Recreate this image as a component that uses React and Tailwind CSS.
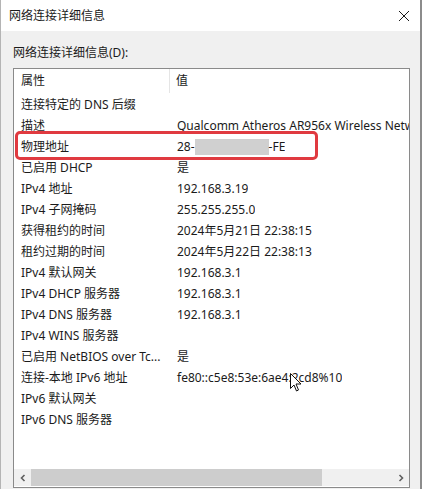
import React from 'react'

const rows = [
  ['连接特定的 DNS 后缀', ''],
  ['描述', 'Qualcomm Atheros AR956x Wireless Network Adapter'],
  ['物理地址', 'mac'],
  ['已启用 DHCP', '是'],
  ['IPv4 地址', '192.168.3.19'],
  ['IPv4 子网掩码', '255.255.255.0'],
  ['获得租约的时间', '2024年5月21日 22:38:15'],
  ['租约过期的时间', '2024年5月22日 22:38:13'],
  ['IPv4 默认网关', '192.168.3.1'],
  ['IPv4 DHCP 服务器', '192.168.3.1'],
  ['IPv4 DNS 服务器', '192.168.3.1'],
  ['IPv4 WINS 服务器', ''],
  ['已启用 NetBIOS over Tc...', '是'],
  ['连接-本地 IPv6 地址', 'fe80::c5e8:53e:6ae4:2cd8%10'],
  ['IPv6 默认网关', ''],
  ['IPv6 DNS 服务器', ''],
]

function Value({ v }) {
  if (v === 'mac') {
    return (
      <span className="flex items-center">
        28-
        <span className="inline-block w-[74px] h-[16px] bg-[#d0d0d0]" />
        -FE
      </span>
    )
  }
  return <span className="whitespace-nowrap">{v}</span>
}

export default function App() {
  return (
    <div
      className="relative w-[422px] h-[489px] overflow-hidden bg-[#f0f0f0] text-[#1b1b1b] text-[12px] border-l border-r-2 border-l-[#b4b4b4] border-r-[#8c8c8c]"
      style={{ fontFamily: '"Noto Sans", "Noto Sans CJK SC", sans-serif' }}
    >
      {/* title bar */}
      <div className="flex items-center justify-between h-[31px] bg-white pl-[8px] pr-[9px]">
        <span>网络连接详细信息</span>
        <svg width="12" height="12" viewBox="0 0 12 12" className="mr-[1px]">
          <path d="M1 1 L11 11 M11 1 L1 11" stroke="#1b1b1b" strokeWidth="1" fill="none" />
        </svg>
      </div>

      <div className="pl-[12px] pt-[13px]">
        <div className="leading-[17px] h-[24px]">网络连接详细信息(D):</div>

        {/* list box */}
        <div className="flex flex-col w-[397px] h-[420px] bg-white border border-[#8a8a8a]">
          <div className="flex h-[24px] items-center">
            <div className="w-[156px] pl-[7px] h-full flex items-center border-r border-[#e5e5e5]">属性</div>
            <div className="pl-[6px]">值</div>
          </div>
          <div className="pt-[1px] overflow-hidden">
            {rows.map(([k, v]) => (
              <div key={k} className="flex h-[21px] items-center">
                <div className="w-[157px] shrink-0 pl-[7px] whitespace-nowrap">{k}</div>
                <div className="pl-[6px] whitespace-nowrap overflow-hidden">
                  <Value v={v} />
                </div>
              </div>
            ))}
          </div>
          <div className="flex-1" />
          {/* horizontal scrollbar */}
          <div className="flex items-center h-[17px] bg-[#f0f0f0] mb-[1px]">
            <div className="w-[17px] h-full flex items-center justify-center">
              <svg width="8" height="8" viewBox="0 0 8 8">
                <path d="M5.5 1 L2.5 4 L5.5 7" stroke="#606060" strokeWidth="1.6" fill="none" />
              </svg>
            </div>
            <div className="w-[291px] h-full bg-[#cdcdcd]" />
            <div className="flex-1" />
            <div className="w-[17px] h-full flex items-center justify-center">
              <svg width="8" height="8" viewBox="0 0 8 8">
                <path d="M2.5 1 L5.5 4 L2.5 7" stroke="#606060" strokeWidth="1.6" fill="none" />
              </svg>
            </div>
          </div>
        </div>
      </div>

      {/* red highlight */}
      <div className="absolute left-[14px] top-[131px] w-[303px] h-[29px] border-[3px] border-[#e03a40] rounded-[5px]" />

      {/* mouse cursor */}
      <svg className="absolute left-[289px] top-[373px]" width="12" height="19" viewBox="0 0 12 19">
        <path d="M0.5 0.5 L0.5 15.5 L4 12 L6.5 18 L8.5 17 L6 11 L11 11 Z" fill="white" stroke="#111" strokeWidth="1" />
      </svg>
    </div>
  )
}
